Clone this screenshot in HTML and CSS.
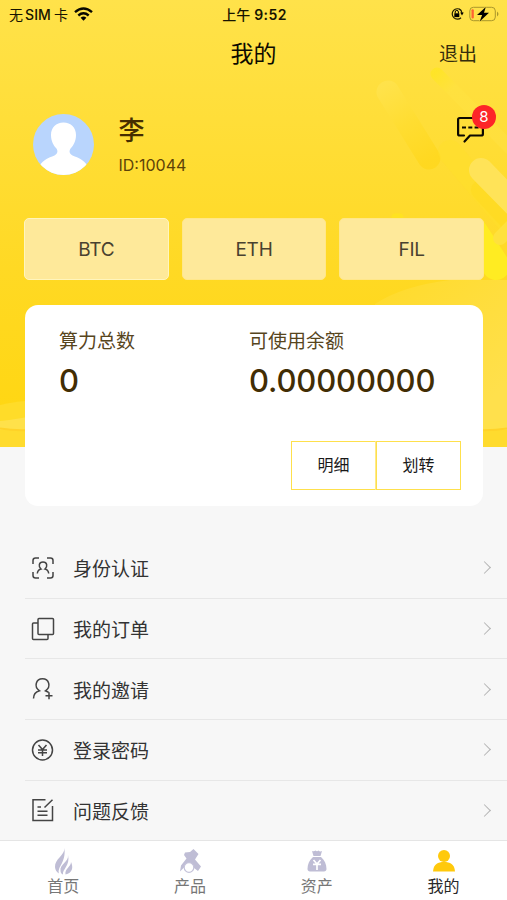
FILE: index.html
```html
<!DOCTYPE html>
<html lang="zh-CN">
<head>
<meta charset="utf-8">
<title>我的</title>
<link rel="stylesheet" href="styles.css">
</head>
<body>
<div class="app">
  <svg class="backdrop" viewBox="0 0 507 447" aria-hidden="true">
    <defs>
      <linearGradient id="sky" x1="0" y1="0" x2="0" y2="1"><stop offset="0" stop-color="#ffe24a"/><stop offset=".2" stop-color="#ffdf3d"/><stop offset=".6" stop-color="#ffd924"/><stop offset="1" stop-color="#ffd60f"/></linearGradient>
      <linearGradient id="streak" gradientUnits="userSpaceOnUse" x1="385" y1="85" x2="430" y2="160"><stop offset="0" stop-color="#ffe34e"/><stop offset=".5" stop-color="#ffdd30"/><stop offset="1" stop-color="#ffd71c"/></linearGradient>
      <linearGradient id="beam" gradientUnits="userSpaceOnUse" x1="435" y1="73" x2="500" y2="140"><stop offset="0" stop-color="#ffe61e"/><stop offset=".25" stop-color="#ffe240"/><stop offset="1" stop-color="#ffe040"/></linearGradient>
      <linearGradient id="pale" gradientUnits="userSpaceOnUse" x1="385" y1="280" x2="490" y2="400"><stop offset="0" stop-color="#ffdb2c"/><stop offset="1" stop-color="#ffe04c"/></linearGradient>
    </defs>
    <path fill="url(#sky)" d="M0 0h507v447H0z"/>
    <g stroke-linecap="round" fill="none">
      <path d="M388 92L429 158" stroke="url(#streak)" stroke-width="23" opacity=".8"/>
      <path d="M437 74L520 158" stroke="url(#beam)" stroke-width="13" opacity=".7"/>
      <path d="M450 152L520 235" stroke="#ffe029" stroke-width="24" opacity=".5"/>
      <path d="M481 190L520 232" stroke="#ffda20" stroke-width="20" opacity=".6"/>
      <path d="M481 170L525 215" stroke="#ffe358" stroke-width="24"/>
      <path d="M474 232L496 266" stroke="#ffec22" stroke-width="28"/>
      <path d="M500 238L520 218" stroke="#ffe13d" stroke-width="14"/>
      <path d="M395 217h5" stroke="#ffe51e" stroke-width="7" opacity=".7"/>
    </g>
    <path fill="url(#pale)" d="M375 304Q402 286 450 280H507V447H375z"/>
    <path fill="#ffdc29" d="M0 405Q16 401 38 400V447H0z"/>
    <path fill="#ffe14a" d="M0 421Q12 420 38 415V447H0zM470 421H507V447H470z"/>
    <path fill="#ffdb2e" d="M0 430H507v17H0z"/>
    <path fill="none" stroke="#ffd228" stroke-width="2" d="M0 428.500Q15 431 30 430H475Q492 431 507 428.500"/>
  </svg>

  <header class="status">
    <div class="status-side"><span class="carrier">无<span class="sim">SIM</span>卡</span>
      <svg class="wifi" width="19" height="14" viewBox="0 0 19 14"><g fill="none" stroke="#090800" stroke-width="2.4"><path d="M1 5.200Q9.500-2.200 18 5.200"/><path d="M4.300 8.500Q9.500 4.200 14.700 8.500"/></g><path d="M6.600 10.700Q9.500 8.300 12.400 10.700L9.500 13.700z"/></svg>
    </div>
    <div class="clock">上午<span class="time">9:52</span></div>
    <div class="status-side status-right">
      <svg width="14" height="14" viewBox="0 0 14 14"><path fill="none" stroke="#211c00" stroke-width="1.2" d="M10.800 3A5.200 5.200 0 1 0 11 10.700M9 1.900A5.200 5.200 0 0 1 12 6"/><path d="M10.200 5.500h3.500L12 8.400z"/><path d="M4.300 6.300h5v3.800h-5z"/><path fill="none" stroke="#000" d="M5.200 6.500V5a1.600 1.600 0 0 1 3.200 0v1.500"/></svg>
      <svg width="31" height="16" viewBox="0 0 31 16"><rect x=".8" y="1.300" width="25.500" height="13.400" rx="3.600" fill="none" stroke="#aa972b"/><path fill="#aa972b" d="M28 5.500q3 2.500 0 5z"/><rect x="2.500" y="3.300" width="2.300" height="9.300" rx="1" fill="#ff6333"/><path stroke="#ffe34a" stroke-width="1" paint-order="stroke" d="M16.800 1L8 9h5.100l-2.400 6.400L20 6.800h-5z"/></svg>
    </div>
  </header>

  <nav class="nav"><h1>我的</h1><a class="logout">退出</a></nav>

  <section class="profile">
    <svg class="avatar" viewBox="0 0 61 61"><defs><clipPath id="disc"><circle cx="30.500" cy="30.500" r="30.500"/></clipPath></defs><g clip-path="url(#disc)"><path fill="#b9d5fd" d="M0 0h61v61H0z"/><path fill="#fff" d="M30.500 8.500C23 8.500 18 13.500 18 21c0 6 2.500 10.500 5 13 2.500 3 1.500 6-1.500 7.500C15 44 10.500 46 7 51v10h47V51c-3.500-5-8-7-14.500-9.500-3-1.500-4-4.500-1.500-7.500 2.500-2.500 5-7 5-13 0-7.500-5-12.500-12.500-12.500z"/></g></svg>
    <div class="who"><div class="name">李</div><div class="uid">ID:10044</div></div>
    <div class="messages">
      <svg width="30" height="30" viewBox="0 0 30 30" fill="none" stroke="#0d0900" stroke-width="2.2" stroke-linecap="round" stroke-linejoin="round"><path d="M8 21.500H3.700Q2.100 21.500 2.100 20V5.500Q2.100 4 3.700 4H25.300Q26.900 4 26.900 5.500V20q0 1.500-1.600 1.500H14L8.500 27.500"/><path stroke-dasharray="4 2.300" stroke-width="2" stroke-linecap="butt" d="M6 13.500h16.600"/></svg>
      <span class="badge">8</span>
    </div>
  </section>

  <div class="coins"><div class="coin coin-active">BTC</div><div class="coin">ETH</div><div class="coin">FIL</div></div>

  <section class="card">
    <div class="stats">
      <div class="stat"><div class="label">算力总数</div><div class="value">0</div></div>
      <div class="stat"><div class="label">可使用余额</div><div class="value">0.00000000</div></div>
    </div>
    <div class="actions"><div class="action">明细</div><div class="action">划转</div></div>
  </section>

  <ul class="menu">
    <li><svg class="ico" viewBox="0 0 24 24"><path d="M2 8V4.500Q2 2 4.500 2H8M16 2h3.500Q22 2 22 4.500V8M22 16v3.500q0 2.500-2.500 2.500H16M8 22H4.500Q2 22 2 19.500V16"/><path d="M6.300 17.500c.3-2.500 1.200-4 3.700-4.500C7.200 10.500 7.700 6 12 6s4.800 4.500 2 7c2.500.5 3.400 2 3.700 4.500"/></svg><span>身份认证</span><i class="chevron"></i></li>
    <li><svg class="ico" viewBox="0 0 24 24"><rect x="7" y="1.500" width="15.500" height="16" rx="1"/><path d="M7 6H2.500Q1.500 6 1.500 7v14.500q0 1 1 1H16q1 0 1-1v-4"/></svg><span>我的订单</span><i class="chevron"></i></li>
    <li><svg class="ico" viewBox="0 0 24 24"><path d="M2.500 21.500c0-4.500 2-6.500 6-7.700-6-4-3.500-12 3-12s9 8 3 12l3 1.400M14.500 18.800h7M18 15.300v7"/></svg><span>我的邀请</span><i class="chevron"></i></li>
    <li><svg class="ico" viewBox="0 0 24 24"><circle cx="11.500" cy="12" r="10"/><path d="M7.500 7l4 4.500 4-4.500M7 12h9M7 14.800h9M11.500 11.500V18"/></svg><span>登录密码</span><i class="chevron"></i></li>
    <li><svg class="ico" viewBox="0 0 24 24"><path d="M14.500 1.800H2V22.500h19.500V8M21.500 1.800L13.500 9.500M6.500 9H10M6.500 13.300h10M6.500 17.300h10"/></svg><span>问题反馈</span><i class="chevron"></i></li>
  </ul>

  <footer class="tabs">
    <div class="tab"><svg viewBox="0 0 28 28"><path d="M15.500 0C16 7 5.500 11 6 19c.2 3 1.500 5 4 6.500-2-7 7-10 5.500-25.500z"/><path d="M19 7c1 7-8.500 9-7.500 16 .2 1.800 1 3 2.500 3.500-1-5 7.500-9 5-19.500z"/><path d="M22 14c0 5-6.500 6.500-5.500 12.500 7-1.500 8-7 5.500-12.500z"/></svg><span>首页</span></div>
    <div class="tab"><svg viewBox="0 0 28 28"><path d="M9 4.500L14 4l3.500-3 5 5-3.500 5.500 6 7-3 4.500-6-4.500H9L4 23.500l1-6 5.500-7L8 7z"/><circle cx="13" cy="19.500" r="4.800" fill="#fff" stroke="#c5c3da" stroke-width="1.200"/></svg><span>产品</span></div>
    <div class="tab"><svg viewBox="0 0 28 28"><path d="M9 3q2 .8 3.500-.5 1.500 1.600 3 0Q17 4 19 3l-1.500 5h-7zM10 9h8c3.500 3 5.500 7 5.500 12 0 1.500-1 2.500-2.500 2.500H7c-1.500 0-2.500-1-2.500-2.500C4.500 16 6.500 12 10 9z"/><path fill="none" stroke="#fff" stroke-width="1.700" d="M10.500 12l3.500 4 3.500-4M10 16.300h8M14 16v6"/></svg><span>资产</span></div>
    <div class="tab tab-on"><svg viewBox="0 0 28 28"><circle cx="14" cy="8" r="6"/><path d="M3 23.500C3.500 16 8 14 14 14s10.500 2 11 9.500z"/></svg><span>我的</span></div>
  </footer>
</div>
</body>
</html>
```

FILE: styles.css
```css
* { box-sizing: border-box; }
body {
  margin: 0;
  background: #f7f7f7;
  font-family: Inter, "Noto Sans CJK SC", sans-serif;
  color: #333;
}
.app {
  position: relative;
  display: flex;
  flex-direction: column;
  width: 507px;
  height: 900px;
  overflow: hidden;
  isolation: isolate;
}
.app > * { flex-shrink: 0; }
.backdrop {
  position: absolute;
  top: 0;
  left: 0;
  z-index: -1;
  width: 507px;
  height: 447px;
}
.status {
  display: flex;
  align-items: center;
  height: 27px;
  padding: 0 7px 0 9px;
  color: #171300;
  font-size: 14px;
  font-weight: 400;
  white-space: nowrap;
}
.status-side { display: flex; flex: 1; align-items: center; gap: 6px; }
.status-right { justify-content: flex-end; gap: 5px; }
.sim { margin: 0 3px 0 2px; font-weight: 500; letter-spacing: .1px; }
.clock { font-weight: 500; }
.time { margin-left: 4px; font-weight: 600; letter-spacing: .4px; }
.nav {
  display: grid;
  grid-template-columns: 1fr auto 1fr;
  align-items: center;
  height: 50px;
  padding: 0 30px;
}
.nav h1 {
  grid-column: 2;
  margin: 0;
  color: #0c0a00;
  font-size: 23px;
  font-weight: 400;
}
.logout { justify-self: end; color: #352d0c; font-size: 19px; }
.profile {
  display: flex;
  height: 61px;
  margin: 37px 21px 0 33px;
}
.avatar { width: 61px; height: 61px; }
.who { flex: 1; margin-left: 24.500px; }
.name {
  height: 33px;
  color: #462e00;
  font-size: 26px;
  font-weight: 500;
  line-height: 33px;
}
.uid { margin-top: 8px; color: #5d4208; font-size: 16px; line-height: 20px; }
.messages { position: relative; width: 30px; height: 30px; }
.badge {
  position: absolute;
  top: -9px;
  left: 16px;
  width: 24px;
  height: 24px;
  border-radius: 50%;
  background: #fd2528;
  color: #fff;
  font-size: 15px;
  line-height: 24px;
  text-align: center;
}
.coins {
  display: grid;
  grid-template-columns: repeat(3, 1fr);
  gap: 13px;
  height: 62px;
  margin: 43px 23px 0 24px;
}
.coin {
  display: flex;
  align-items: center;
  justify-content: center;
  padding-top: 1px;
  border: 1px solid #ffe78a;
  border-radius: 5px;
  background: #fee99a;
  color: #49412f;
  font-size: 19px;
  letter-spacing: -.2px;
}
.coin-active { border-color: #fff5bd; }
.card {
  display: flex;
  flex-direction: column;
  justify-content: space-between;
  height: 201px;
  margin: 25px 24px 0 25px;
  padding: 21px 22px 16px 34px;
  border-radius: 13px;
  background: #fff;
}
.stats { display: grid; grid-template-columns: 190px 1fr; }
.label { color: #57451d; font-size: 19px; line-height: 31px; }
.value {
  margin-top: 3px;
  color: #422d04;
  font-size: 31px;
  font-weight: 500;
  line-height: 42px;
  letter-spacing: -.15px;
}
.actions { display: flex; justify-content: flex-end; }
.action {
  width: 85px;
  height: 49px;
  border: 1px solid #fee04c;
  color: #191919;
  font-size: 16px;
  font-weight: 400;
  line-height: 47px;
  text-align: center;
}
.action + .action { box-shadow: -1px 0 #fee98a; }
.menu {
  flex: 1;
  margin: 32px 0 0 25px;
  padding: 0;
  list-style: none;
}
.menu li {
  display: flex;
  align-items: center;
  height: 60.700px;
  padding: 0 18px 0 6px;
  border-bottom: 1px solid #e7e7e7;
  font-size: 19px;
}
.menu li:last-child { height: 59px; border-bottom: 0; }
.menu span { flex: 1; margin-left: 18px; }
.ico {
  width: 24px;
  height: 24px;
  fill: none;
  stroke: #444;
  stroke-width: 1.500;
}
.chevron {
  width: 9px;
  height: 9px;
  border: solid #b5b5b5;
  border-width: 1.500px 1.500px 0 0;
  transform: rotate(45deg);
}
.tabs {
  display: grid;
  grid-template-columns: repeat(4, 1fr);
  height: 60px;
  border-top: 1px solid #e5e5e5;
  background: #fff;
}
.tab {
  display: flex;
  flex-direction: column;
  align-items: center;
  padding-top: 7px;
  color: #777;
  font-size: 16px;
  line-height: 20px;
}
.tab svg { width: 28px; height: 28px; fill: #bfbdd5; }
.tab-on { color: #292929; }
.tab-on svg { fill: #ffc90c; }
```
